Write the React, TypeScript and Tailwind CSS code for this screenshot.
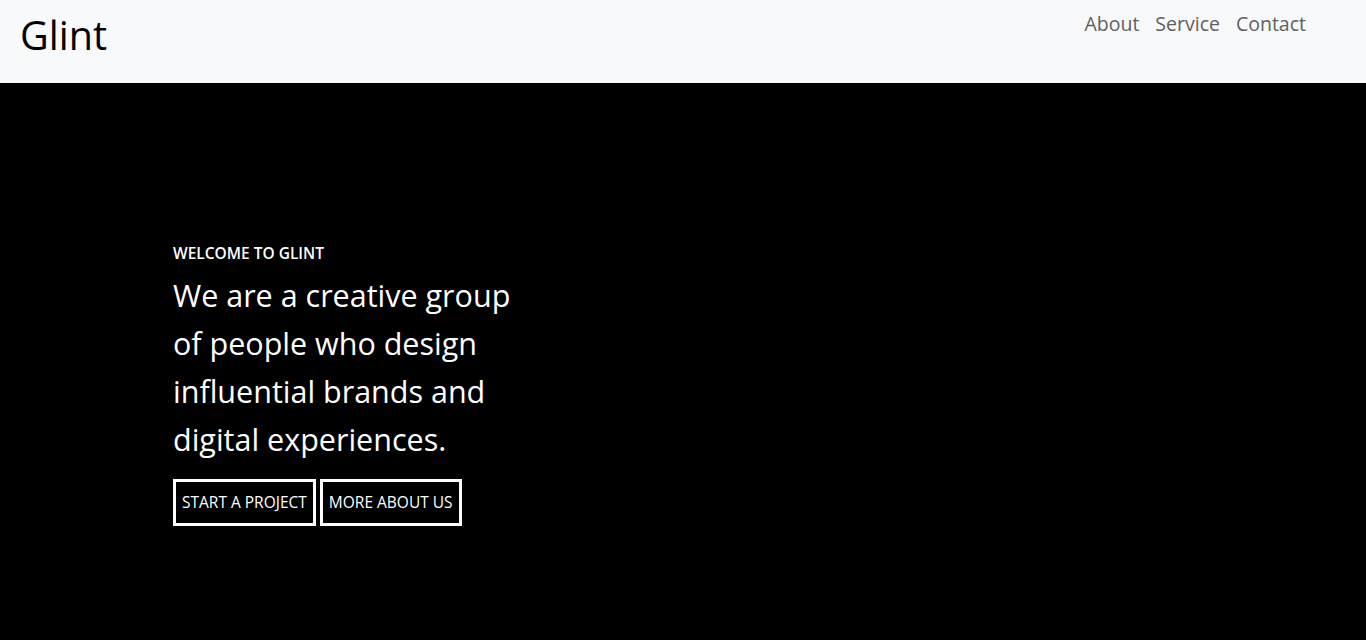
import React from "react";

const font = { fontFamily: '"Open Sans", "Noto Sans", sans-serif' };

const Navbar = () => {
  return (
    <nav className="flex h-[83px] items-start justify-between bg-[#f8f9fa] pl-5 pr-[60px]">
      <a href="#" className="mt-[12px] text-[39.5px] leading-[1.2] text-black">
        Glint
      </a>
      <ul className="mt-[9px] flex items-center gap-4 text-[19.5px] font-medium leading-[30px] text-[#606060]">
        <li>
          <a href="#about">About</a>
        </li>
        <li>
          <a href="#service">Service</a>
        </li>
        <li>
          <a href="#contact">Contact</a>
        </li>
      </ul>
    </nav>
  );
};

const Hero = () => {
  return (
    <section className="h-[557px] bg-black pl-[173px] pt-[160px] text-white">
      <div className="w-[360px]">
        <h3 className="text-[15.5px] font-semibold uppercase leading-[20px]">
          Welcome to Glint
        </h3>
        <h1 className="mt-[8px] text-[30.5px] leading-[48px]">
          We are a creative group of people who design influential brands and
          digital experiences.
        </h1>
        <div className="mt-[16px] flex gap-1">
          <a
            href="#project"
            className="flex h-[47px] items-center border-[3px] border-white px-[6px] text-[15.5px] uppercase"
          >
            Start a project
          </a>
          <a
            href="#about"
            className="flex h-[47px] items-center border-[3px] border-white px-[6px] text-[15.5px] uppercase"
          >
            More about us
          </a>
        </div>
      </div>
    </section>
  );
};

export default function App() {
  return (
    <div style={font} className="min-h-screen bg-black">
      <Navbar />
      <Hero />
    </div>
  );
}
